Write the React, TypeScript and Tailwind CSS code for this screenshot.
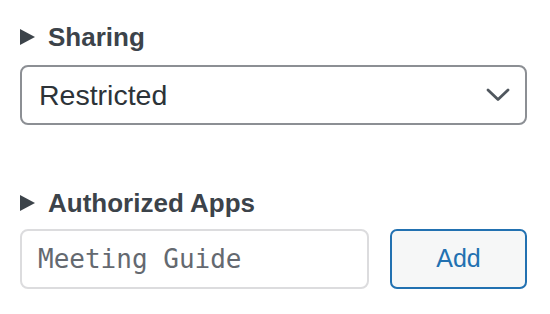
function Caret() {
  return (
    <svg width="15" height="16" viewBox="0 0 15 16" className="shrink-0">
      <polygon points="0,0 15,8 0,16" fill="#3c434a" />
    </svg>
  );
}

function Chevron() {
  return (
    <svg width="26" height="16" viewBox="0 0 26 16" className="shrink-0">
      <polyline
        points="3,3 13,12.5 23,3"
        fill="none"
        stroke="#50575e"
        strokeWidth="2.8"
        strokeLinecap="round"
        strokeLinejoin="round"
      />
    </svg>
  );
}

function SectionHeading({ title }: { title: string }) {
  return (
    <div className="flex items-center gap-[13px] text-[26px] leading-[30px] font-bold text-[#3c434a]">
      <Caret />
      <span>{title}</span>
    </div>
  );
}

export default function App() {
  return (
    <div
      className="h-[314px] w-[550px] bg-white pt-[22px] pl-[20px] pr-[23px]"
      style={{ fontFamily: '"Liberation Sans", Arial, sans-serif' }}
    >
      <SectionHeading title="Sharing" />
      <div className="mt-[13px] flex h-[60px] items-center justify-between rounded-[8px] border-2 border-[#8c8f94] pl-[17px] pr-[14px] text-[28.5px] text-[#2c3338]">
        <span>Restricted</span>
        <Chevron />
      </div>

      <div className="mt-[63px]">
        <SectionHeading title="Authorized Apps" />
      </div>
      <div className="mt-[11px] flex gap-[21px]">
        <input
          type="text"
          placeholder="Meeting Guide"
          className="h-[60px] w-[349px] rounded-[8px] border-2 border-[#dcdcde] bg-white px-[16px] text-[26px] text-[#2c3338] outline-none placeholder:text-[#646970]"
          style={{ fontFamily: '"DejaVu Sans Mono", monospace' }}
        />
        <button className="h-[60px] w-[137px] rounded-[7px] border-2 border-[#2271b1] bg-[#f6f7f7] text-[25px] text-[#2271b1]">
          Add
        </button>
      </div>
    </div>
  );
}
